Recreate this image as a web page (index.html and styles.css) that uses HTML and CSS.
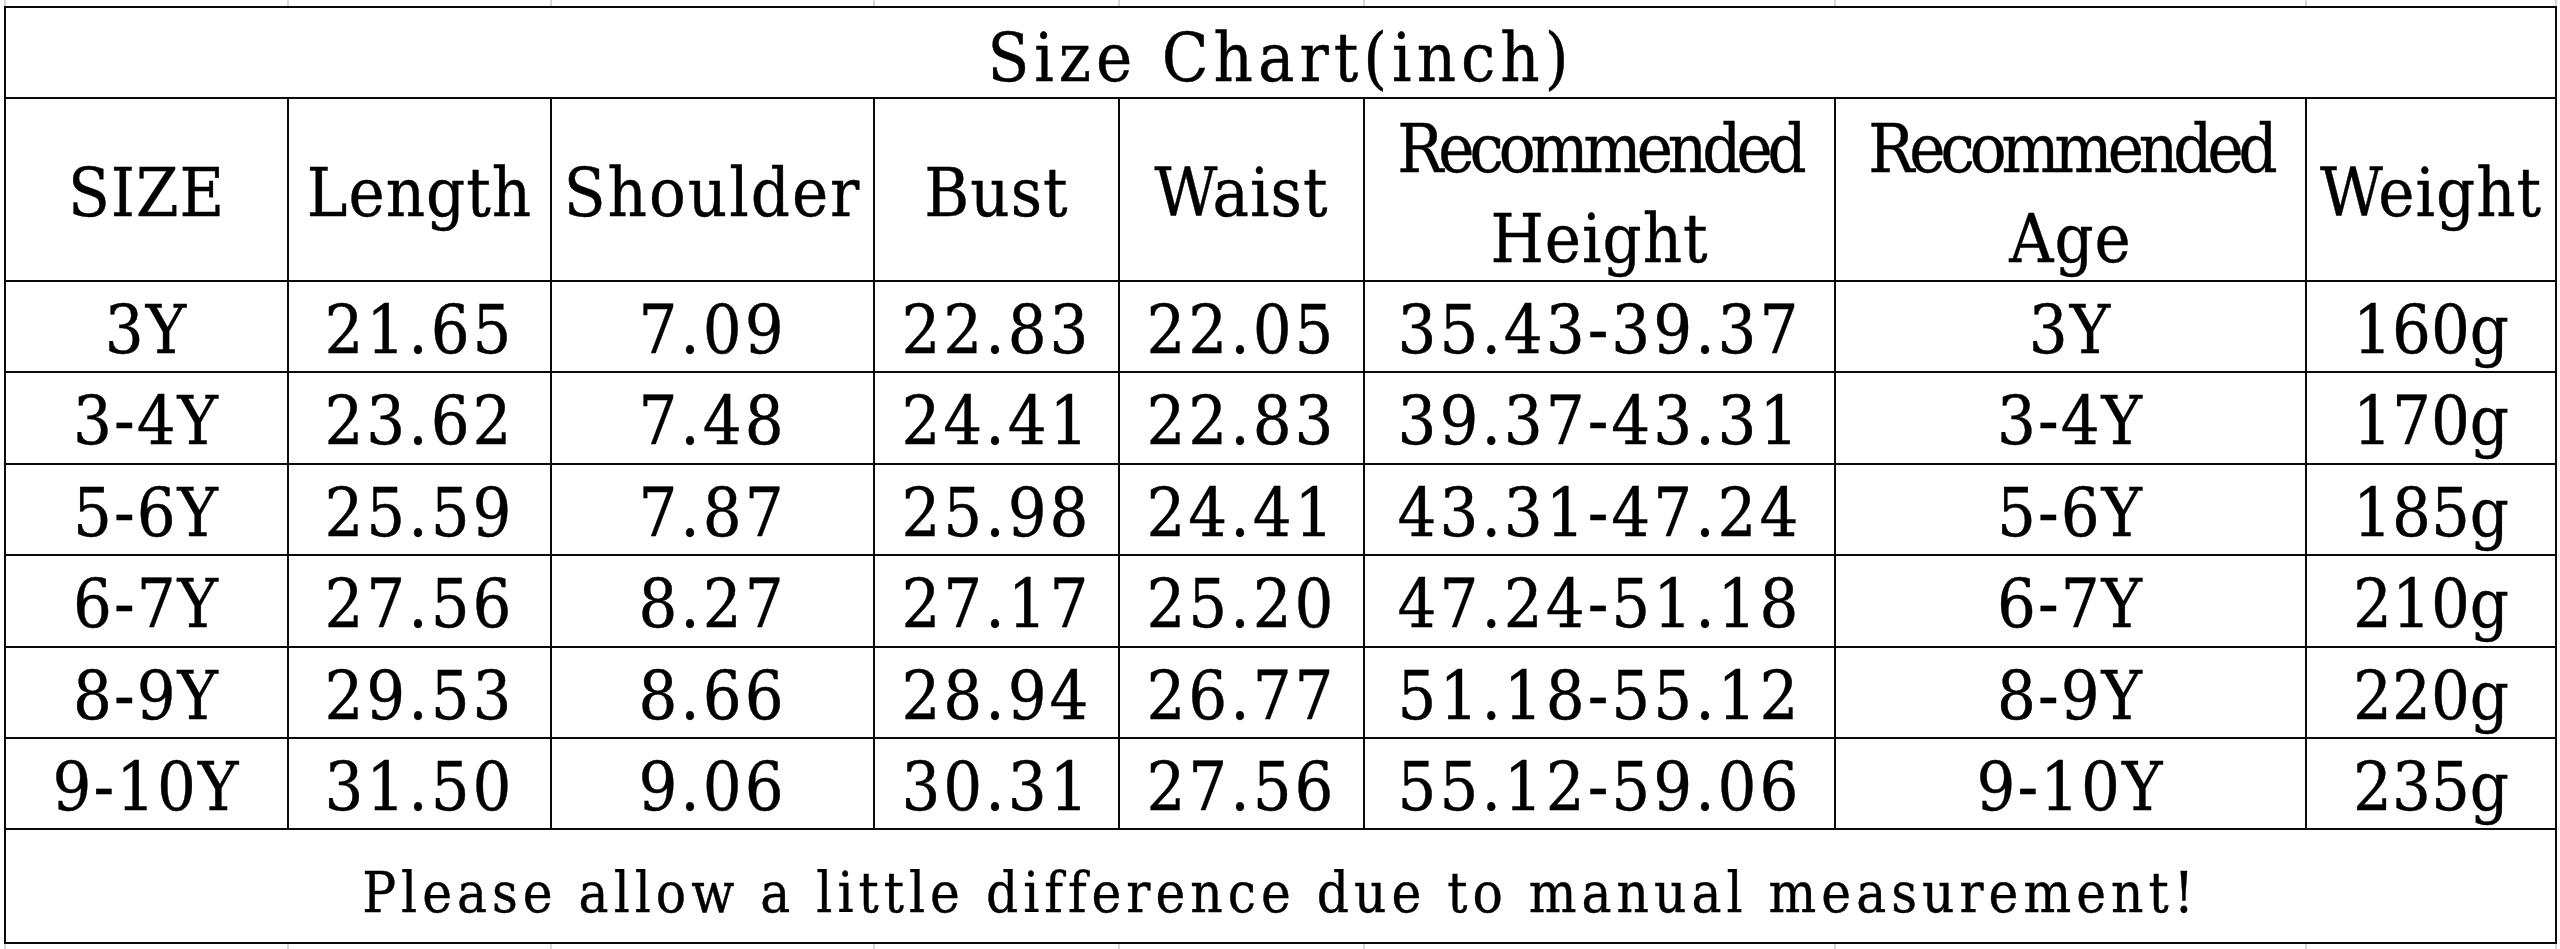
FILE: index.html
```html
<!DOCTYPE html>
<html lang="en">
<head>
<meta charset="utf-8">
<title>Size Chart(inch)</title>
<link rel="stylesheet" href="styles.css">
</head>
<body>
<div class="sheet">
  <div class="strip top" aria-hidden="true"><i></i><i></i><i></i><i></i><i></i><i></i><i></i><i></i></div>
  <div class="chart" role="table" aria-label="Size Chart(inch)">
    <div class="cell title" role="rowheader">Size Chart(inch)</div>

    <div class="cell head">SIZE</div>
    <div class="cell head">Length</div>
    <div class="cell head wide">Shoulder</div>
    <div class="cell head">Bust</div>
    <div class="cell head">Waist</div>
    <div class="cell head two"><span class="tight">Recommended</span><span>Height</span></div>
    <div class="cell head two"><span class="tight">Recommended</span><span>Age</span></div>
    <div class="cell head">Weight</div>

    <div class="cell age">3Y</div><div class="cell num">21.65</div><div class="cell num">7.09</div><div class="cell num">22.83</div><div class="cell num">22.05</div><div class="cell num">35.43-39.37</div><div class="cell age">3Y</div><div class="cell">160g</div>
    <div class="cell age">3-4Y</div><div class="cell num">23.62</div><div class="cell num">7.48</div><div class="cell num">24.41</div><div class="cell num">22.83</div><div class="cell num">39.37-43.31</div><div class="cell age">3-4Y</div><div class="cell">170g</div>
    <div class="cell age">5-6Y</div><div class="cell num">25.59</div><div class="cell num">7.87</div><div class="cell num">25.98</div><div class="cell num">24.41</div><div class="cell num">43.31-47.24</div><div class="cell age">5-6Y</div><div class="cell">185g</div>
    <div class="cell age">6-7Y</div><div class="cell num">27.56</div><div class="cell num">8.27</div><div class="cell num">27.17</div><div class="cell num">25.20</div><div class="cell num">47.24-51.18</div><div class="cell age">6-7Y</div><div class="cell">210g</div>
    <div class="cell age">8-9Y</div><div class="cell num">29.53</div><div class="cell num">8.66</div><div class="cell num">28.94</div><div class="cell num">26.77</div><div class="cell num">51.18-55.12</div><div class="cell age">8-9Y</div><div class="cell">220g</div>
    <div class="cell age">9-10Y</div><div class="cell num">31.50</div><div class="cell num">9.06</div><div class="cell num">30.31</div><div class="cell num">27.56</div><div class="cell num">55.12-59.06</div><div class="cell age">9-10Y</div><div class="cell">235g</div>

    <div class="cell note">Please allow a little difference due to manual measurement!</div>
  </div>
  <div class="strip bottom" aria-hidden="true"><i></i><i></i><i></i><i></i><i></i><i></i><i></i><i></i></div>
</div>
</body>
</html>
```

FILE: styles.css
```css
html, body {
  margin: 0;
  padding: 0;
  background: #ffffff;
}

body {
  width: 2560px;
  height: 949px;
  overflow: hidden;
  font-family: "DejaVu Serif Condensed", "DejaVu Serif", serif;
  font-stretch: condensed;
  color: #000;
}

.sheet {
  padding-left: 4px;
}

.strip {
  display: grid;
  width: 2553px;
  grid-template-columns: 281px 261px 321px 243px 243px 469px 469px 248px;
  gap: 2px;
  padding: 0 2px;
  box-sizing: border-box;
  background: #d8d8d8;
}

.strip i {
  background: #fff;
}

.strip.top {
  height: 6px;
}

.strip.bottom {
  height: 6px;
}

.chart {
  display: grid;
  width: 2553px;
  grid-template-columns: 281px 261px 321px 243px 243px 469px 469px 248px;
  grid-template-rows: 89px 181px 89px 90px 89px 90px 89px 89px 112px;
  gap: 2px;
  padding: 2px;
  box-sizing: border-box;
  background: #0a0a0a;
}

.cell {
  background: #fff;
  display: flex;
  align-items: center;
  justify-content: center;
  font-size: 68px;
  line-height: 1;
  white-space: nowrap;
  padding-top: 6px;
  box-sizing: border-box;
  -webkit-text-stroke: 0.4px #000;
}

.num {
  letter-spacing: 3px;
}

.age {
  letter-spacing: 2px;
}

.title {
  grid-column: 1 / -1;
  letter-spacing: 5px;
  padding-top: 10px;
}

.head {
  letter-spacing: 1px;
}

.wide {
  letter-spacing: 2px;
}

.two {
  flex-direction: column;
  line-height: 90px;
  padding-top: 8px;
}

.tight {
  letter-spacing: -5px;
}

.note {
  grid-column: 1 / -1;
  font-size: 56px;
  letter-spacing: 5px;
  padding-top: 14px;
}
```
